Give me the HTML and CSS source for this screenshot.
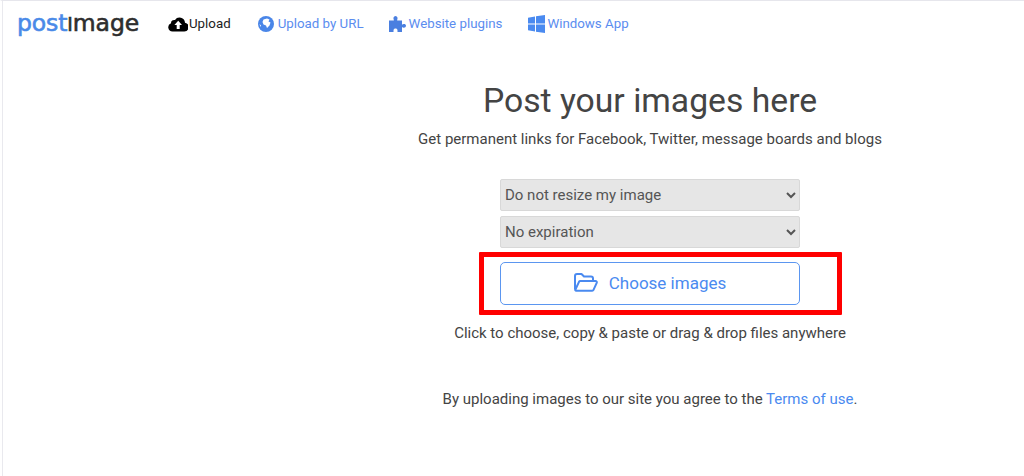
FILE: index.html
```html
<!DOCTYPE html>
<html lang="en">
<head>
<meta charset="utf-8">
<title>Postimage</title>
<link rel="stylesheet" href="styles.css">
</head>
<body>
<div class="frame">
  <header class="nav">
    <a class="logo"><span class="logo-post">post</span><span class="logo-image"><span class="logo-i">i</span>mage</span></a>
    <a class="nav-item nav-active">
      <svg class="ico" width="20" height="16" viewBox="0 0 20 16"><path fill="#000" d="M4.500 15.500A4.300 4.300 0 0 1 3 7.200 3.200 3.200 0 0 1 7 4 5.500 5.500 0 0 1 17 6.800 4.400 4.400 0 0 1 15.800 15.500Z"/><path fill="#fff" d="M10.200 4.800 14 9H11.700V13H8.700V9H6.400Z"/></svg>
      Upload</a>
    <a class="nav-item nav-url">
      <svg class="ico" width="16" height="16" viewBox="0 0 16 16"><circle cx="8" cy="8" r="8" fill="#4a86e8"/><path fill="#fff" d="M5.500 3.500 9 2.500 11.500 3.500 10.500 5.500 12.500 6.500 11.500 9.500 9 12 8 9.500 5.500 8.500 4.500 6ZM1.500 8 3 9.500 2.500 11Z"/></svg>
      Upload by URL</a>
    <a class="nav-item">
      <svg class="ico" width="17" height="16" viewBox="0 0 17 16"><path fill="#4a7fe0" d="M0 4.500H4.300C5 4.500 5 4 4.700 3.400 4.100 2.300 4.500 0 6.500 0S8.900 2.300 8.300 3.400C8 4 8 4.500 8.700 4.500H13V8C13 8.600 13.500 8.600 14 8.300 15 7.700 17 8 17 9.800S15 12 14 11.500C13.500 11.200 13 11.200 13 11.800V16H8.500V14.500C8.500 13 7.500 12.500 6.500 12.500S4.500 13 4.500 14.500V16H0Z"/></svg>
      Website plugins</a>
    <a class="nav-item nav-win">
      <svg class="ico" width="17" height="18" viewBox="0 0 17 18"><path fill="#4a8af0" d="M0 2.700 7 1.500V8.500H0ZM8 1.300 17 0V8.500H8ZM0 9.500H7V16.500L0 15.300ZM8 9.500H17V18L8 16.700Z"/></svg>
      Windows App</a>
  </header>
  <main class="main">
    <h1 class="title">Post your images here</h1>
    <p class="lead">Get permanent links for Facebook, Twitter, message boards and blogs</p>
    <div class="controls">
      <select class="pick"><option>Do not resize my image</option></select>
      <select class="pick"><option>No expiration</option></select>
      <div class="choose-wrap">
        <button class="choose" type="button">
          <svg class="folder" width="24" height="19" viewBox="0 0 24 19" fill="none" stroke="#4a8af0" stroke-width="2" stroke-linejoin="round"><path d="M1 16.500V3A2 2 0 0 1 3 1H7.500L10 3.500H17A2 2 0 0 1 19 5.500V7.500"/><path d="M1.200 17 5 8.800A1.500 1.500 0 0 1 6.300 8H21.500A1.300 1.300 0 0 1 22.700 9.800L19.500 16.800A1.500 1.500 0 0 1 18.200 17.700H2.500A1.300 1.300 0 0 1 1.200 17Z"/></svg>
          Choose images
        </button>
        <div class="marker"></div>
      </div>
    </div>
    <p class="hint">Click to choose, copy &amp; paste or drag &amp; drop files anywhere</p>
    <p class="terms">By uploading images to our site you agree to the <a class="terms-link">Terms of use</a>.</p>
  </main>
</div>
</body>
</html>
```

FILE: styles.css
```css
* { box-sizing: border-box; }
html, body { margin: 0; height: 100%; background: #fff; overflow: hidden; }
body { font-family: Roboto, "Liberation Sans", sans-serif; color: #444; }
.frame {
  height: 476px;
  border-top: 1px solid #e6e6ec;
  border-left: 2px solid #fff;
  position: relative;
}
.frame::before {
  content: "";
  position: absolute;
  left: 0; top: 0; bottom: 0;
  width: 1px;
  background: #e9e9ee;
}
.nav {
  display: flex;
  align-items: center;
  height: 45px;
  padding-left: 15px;
  font-size: 13.300px;
}
.logo {
  width: 151px;
  font-family: "DejaVu Sans", sans-serif;
  font-size: 23.500px;
  line-height: 30px;
  letter-spacing: -0.1px;
  font-weight: 400;
  -webkit-text-stroke: 0.6px currentColor;
}
.logo-post { color: #4a8ae8; }
.logo-image { color: #2e2e2e; }
.logo-i { text-transform: uppercase; font-size: 0.8em; }
.nav-item {
  display: flex;
  align-items: center;
  gap: 3px;
  color: #5b8def;
  margin-right: 26px;
}
.nav-active { color: #222; margin-right: 27px; gap: 1px; }
.nav-url { gap: 4px; margin-right: 25px; }
.nav-win { gap: 2px; }
.ico { flex: none; }
.main {
  margin-left: 274px;
  display: flex;
  flex-direction: column;
  align-items: center;
}
.title {
  margin: 34px 0 0;
  font-size: 33.700px;
  line-height: 42px;
  font-weight: 400;
  color: #444;
}
.lead {
  margin: 6px 0 0;
  font-size: 15px;
  line-height: 22px;
  color: #444;
}
.controls {
  margin-top: 29px;
  width: 300px;
  display: flex;
  flex-direction: column;
  gap: 5px;
}
.pick {
  height: 32px;
  width: 100%;
  font: 15px Roboto, sans-serif;
  color: #555;
  background: #e6e6e6;
  border: 1px solid #d8d8d8;
  border-radius: 2px;
  padding-left: 0;
}
.choose-wrap {
  position: relative;
  margin-top: 9px;
}
.choose {
  width: 100%;
  height: 43px;
  display: flex;
  align-items: center;
  justify-content: center;
  gap: 11px;
  padding-bottom: 3px;
  background: #fff;
  border: 1px solid #5b96f0;
  border-radius: 5px;
  color: #4a8af0;
  font: 17px Roboto, sans-serif;
}
.marker {
  position: absolute;
  top: -10px;
  bottom: -10px;
  left: -21px;
  right: -42px;
  border: 5px solid #f00;
  border-radius: 1px;
  pointer-events: none;
}
.hint {
  margin: 18px 0 0;
  font-size: 15px;
  line-height: 20px;
  color: #444;
}
.terms {
  margin: 46px 0 0;
  font-size: 15px;
  line-height: 20px;
  color: #444;
}
.terms-link { color: #4a8af0; }
```
